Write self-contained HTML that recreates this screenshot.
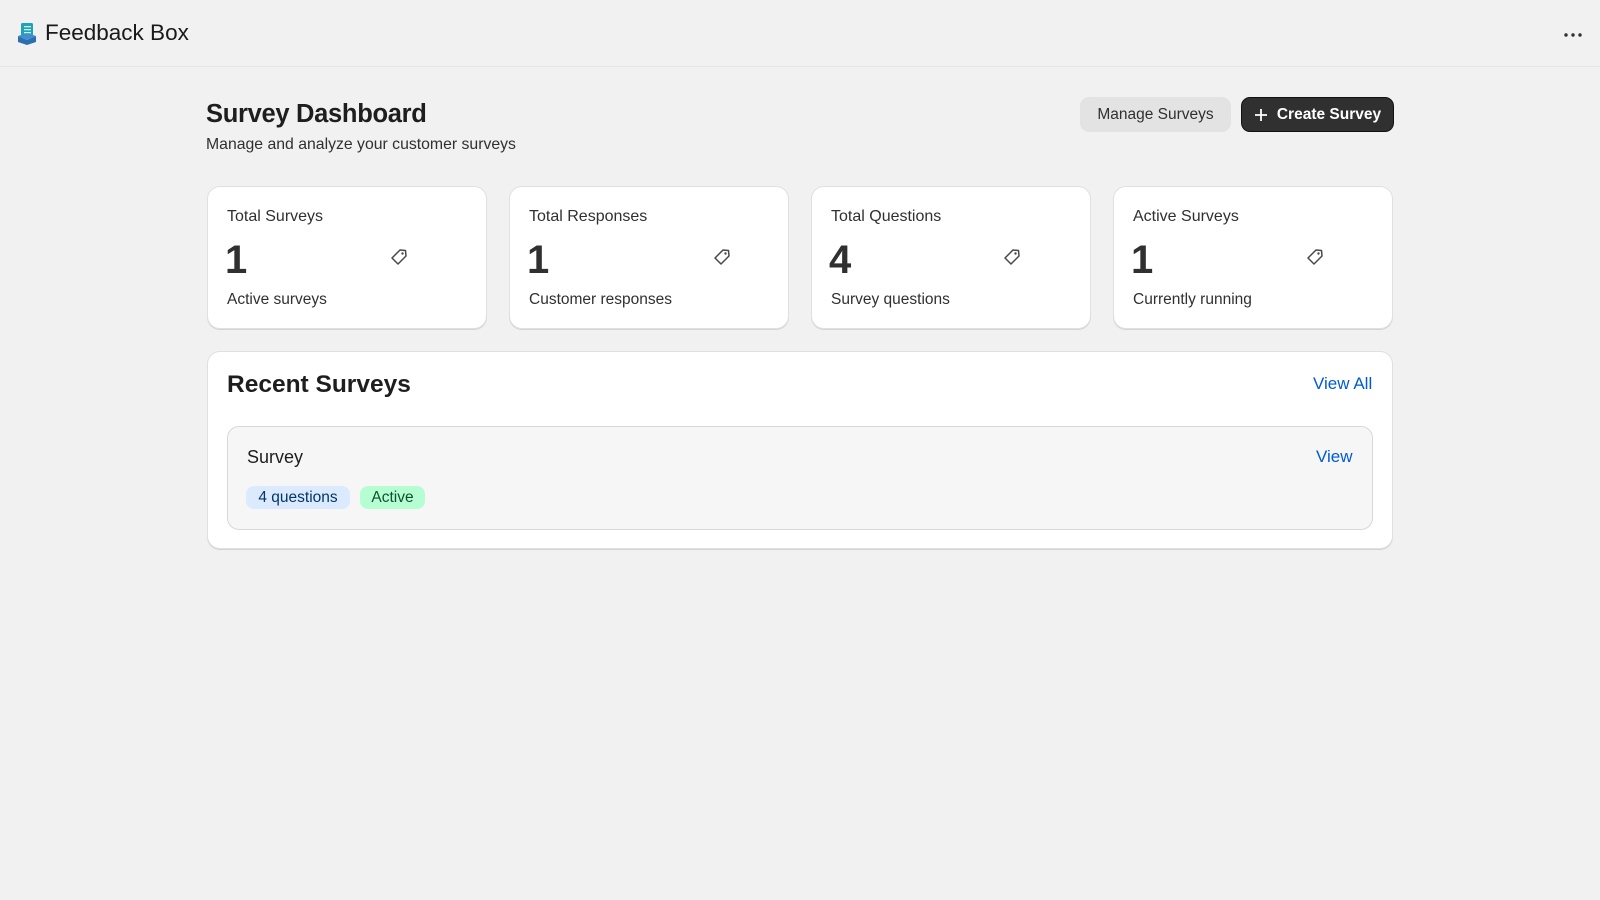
<!DOCTYPE html>
<html><head><meta charset="utf-8"><style>
*{box-sizing:border-box;margin:0;padding:0}
body{width:1600px;height:900px;background:#f1f1f1;font-family:"Liberation Sans",sans-serif;color:#303030;position:relative;overflow:hidden}
.abs{position:absolute}
.hdr{left:0;top:0;width:1600px;height:67px;border-bottom:1px solid #e4e4e4}
.card{background:#fff;border-radius:13px;border:1px solid #e0e0e0;box-shadow:0 1px 0 #d4d4d4}
.st{font-size:16px;color:#303030}
.num{font-size:40px;font-weight:bold;color:#303030}
.sub{font-size:15.5px;color:#303030}
.btn{border-radius:9px;font-size:15.5px;display:flex;align-items:center;justify-content:center}
</style></head><body>
<div class="abs hdr"></div>
<svg class="abs" style="left:17px;top:22px" width="20" height="24" viewBox="0 0 20 24">
<rect x="4" y="1" width="12" height="15" rx="1.5" fill="#1fa3b5"/>
<rect x="7" y="4" width="7" height="1.3" fill="#cdeff3"/><rect x="7" y="7" width="7" height="1.3" fill="#cdeff3"/><rect x="7" y="10" width="7" height="1.3" fill="#cdeff3"/>
<path d="M1 14 L10 18 L19 14 L19 20 L10 23 L1 20Z" fill="#2c6fb0"/>
<path d="M1 14 L10 18 L19 14 L10 11Z" fill="#3d8fd0"/>
</svg>
<div class="abs" style="left:45px;top:20px;font-size:22.5px;color:#1a1a1a">Feedback Box</div>
<svg class="abs" style="left:1563px;top:32px" width="20" height="6"><circle cx="3" cy="3" r="1.7" fill="#303030"/><circle cx="10" cy="3" r="1.7" fill="#303030"/><circle cx="17" cy="3" r="1.7" fill="#303030"/></svg>

<div class="abs" style="left:206px;top:100px;font-size:25.5px;font-weight:bold;color:#1e1e1e;letter-spacing:-0.3px">Survey Dashboard</div>
<div class="abs" style="left:206px;top:136px;font-size:15.8px;color:#303030">Manage and analyze your customer surveys</div>
<div class="abs btn" style="left:1080px;top:97px;width:151px;height:35px;background:#e3e3e3;color:#303030">Manage Surveys</div>
<div class="abs btn" style="left:1241px;top:97px;width:153px;height:35px;background:#303030;color:#fff;font-weight:bold;border:1px solid #111"><svg width="14" height="14" style="margin-right:9px"><path d="M7 1V13M1 7H13" stroke="#fff" stroke-width="1.8"/></svg>Create Survey</div>

<div class="abs card" style="left:207px;top:186px;width:280px;height:143px"></div>
<div class="abs card" style="left:509px;top:186px;width:280px;height:143px"></div>
<div class="abs card" style="left:811px;top:186px;width:280px;height:143px"></div>
<div class="abs card" style="left:1113px;top:186px;width:280px;height:143px"></div>

<div class="abs st" style="left:227px;top:208px">Total Surveys</div>
<div class="abs st" style="left:529px;top:208px">Total Responses</div>
<div class="abs st" style="left:831px;top:208px">Total Questions</div>
<div class="abs st" style="left:1133px;top:208px">Active Surveys</div>
<div class="abs num" style="left:225px;top:238px">1</div>
<div class="abs num" style="left:527px;top:238px">1</div>
<div class="abs num" style="left:829px;top:238px">4</div>
<div class="abs num" style="left:1131px;top:238px">1</div>
<div class="abs sub" style="left:227px;top:291px">Active surveys</div>
<div class="abs sub" style="left:529px;top:291px">Customer responses</div>
<div class="abs sub" style="left:831px;top:291px">Survey questions</div>
<div class="abs sub" style="left:1133px;top:291px">Currently running</div>

<svg class="abs" style="left:390px;top:248px" width="18" height="18" viewBox="0 0 18 18"><path d="M10 2 L15.5 2.5 L16 8 L8 16 L2 10Z" fill="none" stroke="#4a4a4a" stroke-width="1.5" stroke-linejoin="round"/><circle cx="12.5" cy="5.5" r="1.2" fill="#4a4a4a"/></svg>
<svg class="abs" style="left:713px;top:248px" width="18" height="18" viewBox="0 0 18 18"><path d="M10 2 L15.5 2.5 L16 8 L8 16 L2 10Z" fill="none" stroke="#4a4a4a" stroke-width="1.5" stroke-linejoin="round"/><circle cx="12.5" cy="5.5" r="1.2" fill="#4a4a4a"/></svg>
<svg class="abs" style="left:1003px;top:248px" width="18" height="18" viewBox="0 0 18 18"><path d="M10 2 L15.5 2.5 L16 8 L8 16 L2 10Z" fill="none" stroke="#4a4a4a" stroke-width="1.5" stroke-linejoin="round"/><circle cx="12.5" cy="5.5" r="1.2" fill="#4a4a4a"/></svg>
<svg class="abs" style="left:1306px;top:248px" width="18" height="18" viewBox="0 0 18 18"><path d="M10 2 L15.5 2.5 L16 8 L8 16 L2 10Z" fill="none" stroke="#4a4a4a" stroke-width="1.5" stroke-linejoin="round"/><circle cx="12.5" cy="5.5" r="1.2" fill="#4a4a4a"/></svg>

<div class="abs card" style="left:207px;top:351px;width:1186px;height:198px"></div>
<div class="abs" style="left:227px;top:371px;font-size:24.5px;font-weight:bold;color:#1e1e1e">Recent Surveys</div>
<div class="abs" style="left:1313px;top:374px;font-size:17px;color:#005bd3">View All</div>
<div class="abs" style="left:227px;top:426px;width:1146px;height:104px;background:#f6f6f6;border:1px solid #d8d8d8;border-radius:12px"></div>
<div class="abs" style="left:247px;top:447px;font-size:18px;color:#1e1e1e">Survey</div>
<div class="abs" style="left:1316px;top:447px;font-size:17px;color:#005bd3">View</div>
<div class="abs" style="left:246px;top:486px;width:104px;height:23px;border-radius:8px;background:#dbeaff;color:#00366b;font-size:15.5px;text-align:center;line-height:23px">4 questions</div>
<div class="abs" style="left:360px;top:486px;width:65px;height:23px;border-radius:8px;background:#b4fed2;color:#0c5132;font-size:15.5px;text-align:center;line-height:23px">Active</div>
</body></html>
